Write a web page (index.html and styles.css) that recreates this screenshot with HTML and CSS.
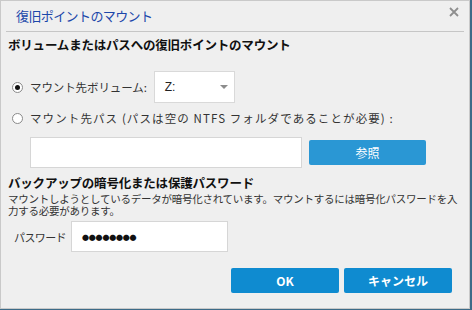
FILE: index.html
```html
<!DOCTYPE html>
<html lang="ja">

<head>
  <meta charset="UTF-8">
  <title>復旧ポイントのマウント</title>
  <link rel="stylesheet" href="styles.css">
</head>

<body>
  <main class="dialog">
    <header class="titlebar">
      <span class="title">復旧ポイントのマウント</span>
      <svg class="close" viewBox="0 0 10 10" width="10" height="10">
        <path d="M1 1 L9 9 M9 1 L1 9" stroke="#8e8e8e" stroke-width="1.8" />
      </svg>
    </header>

    <section class="content">
      <h2 class="heading">ボリュームまたはパスへの復旧ポイントのマウント</h2>

      <div class="row volume-row">
        <span class="radio checked"></span>
        <span class="label">マウント先ボリューム:</span>
        <div class="select">
          <span>Z:</span>
          <span class="arrow"></span>
        </div>
      </div>

      <div class="row path-radio">
        <span class="radio"></span>
        <span class="label">マウント先パス (パスは空の NTFS フォルダであることが必要) :</span>
      </div>

      <div class="row path-row">
        <div class="input path-input"></div>
        <button class="button browse">参照</button>
      </div>

      <h2 class="heading heading-2">バックアップの暗号化または保護パスワード</h2>
      <p class="desc">マウントしようとしているデータが暗号化されています。マウントするには暗号化パスワードを入力する必要があります。</p>

      <div class="row password-row">
        <span class="label">パスワード</span>
        <div class="input password-input">●●●●●●●●</div>
      </div>

      <div class="actions">
        <button class="button action">OK</button>
        <button class="button action">キャンセル</button>
      </div>
    </section>
  </main>
</body>

</html>
```

FILE: styles.css
```css
*,
*::before,
*::after {
  box-sizing: border-box;
}

body {
  margin: 0;
  background: #3d6b88;
  font-family: "Noto Sans CJK JP", "Noto Sans", sans-serif;
  color: #222;
}

.dialog {
  width: 470px;
  height: 309px;
  background: #efefef;
  border: 1px solid #c9c9c9;
  display: flex;
  flex-direction: column;
}

.titlebar {
  height: 31px;
  margin: 0 5px;
  padding: 0 5px 0 10px;
  border-bottom: 1px solid #c6c6c6;
  display: flex;
  justify-content: space-between;
  align-items: center;

  .title {
    color: #1b47aa;
    font-size: 13px;
    letter-spacing: -0.6px;
    line-height: 16px;
  }

  .close {
    align-self: flex-start;
    margin-top: 6px;
  }
}

.content {
  padding: 0 8px 0 7px;
  display: flex;
  flex-direction: column;
}

.heading {
  margin: 5px 0 0;
  font-size: 12.5px;
  font-weight: 700;
  line-height: 16px;
  letter-spacing: -0.2px;
  color: #111;
}

.row {
  display: flex;
  align-items: center;
}

.label {
  font-size: 11.5px;
  letter-spacing: -0.1px;
  line-height: 16px;
  color: #333;
}

.radio {
  width: 11px;
  height: 11px;
  border-radius: 50%;
  border: 1px solid #8a8a8a;
  background: #fff;
  margin: 0 7px 0 4px;
  display: grid;
  place-content: center;

  &.checked::after {
    content: '';
    width: 5px;
    height: 5px;
    border-radius: 50%;
    background: #111;
  }
}

.volume-row {
  margin-top: 18px;
  height: 32px;

  .select {
    margin-left: 7px;
    width: 81px;
    height: 32px;
    background: #fff;
    border: 1px solid #d9d9d9;
    display: flex;
    align-items: center;
    justify-content: space-between;
    padding: 0 6px 0 10px;
    font-family: "Liberation Sans", sans-serif;
    font-size: 12px;
  }

  .arrow {
    width: 0;
    height: 0;
    border-left: 4px solid transparent;
    border-right: 4px solid transparent;
    border-top: 4px solid #8c8c8c;
  }
}

.path-radio {
  margin-top: 7px;

  .label {
    font-size: 11.5px;
    letter-spacing: 1.1px;
  }
}

.input {
  background: #fff;
  border: 1px solid #d6d6d6;
  height: 31px;
}

.button {
  border: 0;
  border-radius: 2px;
  color: #fff;
  font-family: "Noto Sans CJK JP", "Noto Sans", sans-serif;
  font-weight: 700;
  font-size: 12px;
  padding: 0;
  cursor: pointer;
}

.path-row {
  margin-top: 11px;
  padding-left: 22px;
  gap: 7px;

  .path-input {
    width: 272px;
  }

  .browse {
    width: 117px;
    height: 25px;
    background: #2a97d4;
    font-weight: 400;
    font-size: 12px;
  }
}

.heading-2 {
  margin-top: 7px;
  line-height: 15px;
}

.desc {
  margin: 3px 0 0;
  font-size: 10.5px;
  line-height: 12px;
  letter-spacing: -0.25px;
  color: #333;
  width: 458px;
}

.password-row {
  margin-top: 4px;
  padding-left: 6px;
  gap: 5px;

  .label {
    font-size: 11px;
    letter-spacing: -0.6px;
  }

  .password-input {
    width: 157px;
    display: flex;
    align-items: center;
    padding-left: 10px;
    font-size: 7px;
    letter-spacing: -0.2px;
    color: #111;
  }
}

.actions {
  margin-top: 16px;
  margin-right: 9px;
  display: flex;
  justify-content: flex-end;
  gap: 5px;

  .action {
    width: 108px;
    height: 25px;
    background: #0f8bd0;
  }
}
```
